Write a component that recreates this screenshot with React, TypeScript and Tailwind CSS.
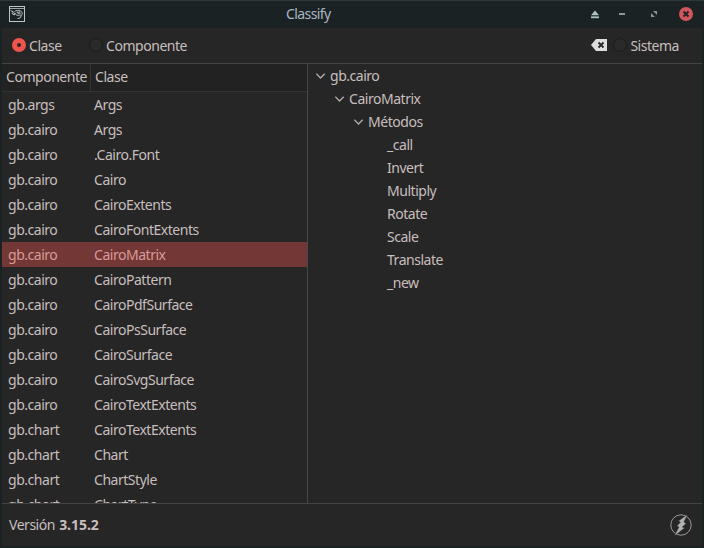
import React from "react";

const rows: [string, string][] = [
  ["gb.args", "Args"],
  ["gb.cairo", "Args"],
  ["gb.cairo", ".Cairo.Font"],
  ["gb.cairo", "Cairo"],
  ["gb.cairo", "CairoExtents"],
  ["gb.cairo", "CairoFontExtents"],
  ["gb.cairo", "CairoMatrix"],
  ["gb.cairo", "CairoPattern"],
  ["gb.cairo", "CairoPdfSurface"],
  ["gb.cairo", "CairoPsSurface"],
  ["gb.cairo", "CairoSurface"],
  ["gb.cairo", "CairoSvgSurface"],
  ["gb.cairo", "CairoTextExtents"],
  ["gb.chart", "CairoTextExtents"],
  ["gb.chart", "Chart"],
  ["gb.chart", "ChartStyle"],
  ["gb.chart", "ChartType"],
];

const methods = ["_call", "Invert", "Multiply", "Rotate", "Scale", "Translate", "_new"];

function Radio({ label, checked }: { label: string; checked?: boolean }) {
  return (
    <label className="flex items-center gap-[3px]">
      <span
        className={
          checked
            ? "mb-0.5 flex size-3.5 items-center justify-center rounded-full bg-[#f0544c]"
            : "mb-0.5 size-3.5 rounded-full border border-[#1b1b1b] bg-[#2a2a2a]"
        }
      >
        {checked && <span className="size-1 rounded-full bg-[#262626]" />}
      </span>
      <span>{label}</span>
    </label>
  );
}

function Chevron() {
  return (
    <svg width="10" height="6" viewBox="0 0 10 6" fill="none" stroke="#b5adad" strokeWidth="1.3">
      <path d="M0.3 0.7 L4.5 5 L8.7 0.7" />
    </svg>
  );
}

function TitleBar() {
  return (
    <header className="flex h-7 shrink-0 items-center border-t border-[#2c393b] bg-[#1b2224] pb-px pl-[9px] pr-[11px]">
      <svg width="16" height="16" viewBox="0 0 16 16" fill="none" stroke="#bcc4c4">
        <rect x="0.5" y="0.5" width="15" height="15" />
        <path d="M1 2.5H15" strokeWidth="0.8" />
        <path d="M1.5 4.5L4.5 6L3 7.5L5.5 9L5 6.5M5.5 5.5C7.5 4 11 3.8 12.8 6C14 8 12.8 10 10.5 9C8.5 9.8 6.5 9 6 7M7.5 6L9.5 7.5L9 5.5M10.5 5.5L11 8M12.5 9.5L11 12L8.5 12.5" />
      </svg>
      <h1 className="ml-[261px] flex-1 tracking-[-0.58px] text-[#a9b6c2]">Classify</h1>
      <svg width="10" height="9" viewBox="0 0 10 9" fill="#adc2be">
        <path d="M5 0.5L9 5.3H1Z" />
        <rect x="1" y="6.4" width="8" height="1.8" />
      </svg>
      <span className="ml-[19px] h-0.5 w-1.5 bg-[#8a9698]" />
      <svg className="ml-[26px]" width="6" height="6" viewBox="0 0 6 6" fill="#8a9698">
        <path d="M2 0H6V4ZM0 2L4 6H0Z" />
      </svg>
      <svg className="ml-[22px]" width="14" height="14" viewBox="0 0 14 14">
        <circle cx="7" cy="7" r="7" fill="#d2555b" />
        <path d="M4.5 4.5L9.5 9.5M9.5 4.5L4.5 9.5" stroke="#1b2224" strokeWidth="1.8" />
      </svg>
    </header>
  );
}

function Toolbar() {
  return (
    <div className="flex h-9 shrink-0 items-center border-b border-[#444444] pl-2.5 pr-[23px] pt-px">
      <Radio label="Clase" checked />
      <div className="ml-[27.5px]">
        <Radio label="Componente" />
      </div>
      <svg className="mb-0.5 ml-auto mr-1.5" width="16" height="12" viewBox="0 0 16 12">
        <path d="M5 0H16V12H5L0 6Z" fill="#dedede" />
        <path d="M7.5 3.5L12.5 8.5M12.5 3.5L7.5 8.5" stroke="#262626" strokeWidth="1.8" />
      </svg>
      <Radio label="Sistema" />
    </div>
  );
}

function ClassTable() {
  return (
    <section className="flex w-[306px] shrink-0 flex-col overflow-hidden border-r border-[#484848]">
      <div className="flex h-7 shrink-0 items-center border-b border-[#333333] bg-[#222222]">
        <span className="flex h-full w-[89px] shrink-0 items-center border-r border-[#353535] pb-px pl-1">Componente</span>
        <span className="pb-px pl-1">Clase</span>
      </div>
      {rows.map(([component, name], i) => (
        <div
          key={i}
          className={
            i === 6
              ? "flex h-[25px] shrink-0 items-center bg-[#733735] pl-1.5 pt-px text-[#d99a98]"
              : "flex h-[25px] shrink-0 items-center pl-1.5 pt-px"
          }
        >
          <span className="w-[86px]">{component}</span>
          <span>{name}</span>
        </div>
      ))}
    </section>
  );
}

function Tree() {
  return (
    <section className="flex-1">
      <div className="flex h-[23px] items-center gap-1 pl-2"><Chevron />gb.cairo</div>
      <div className="flex h-[23px] items-center gap-1 pl-[27px]"><Chevron />CairoMatrix</div>
      <div className="flex h-[23px] items-center gap-1 pl-[46px]"><Chevron />Métodos</div>
      {methods.map((m) => (
        <div key={m} className="flex h-[23px] items-center pl-[79px]">{m}</div>
      ))}
    </section>
  );
}

export default function App() {
  return (
    <div className="flex h-[548px] w-[704px] flex-col overflow-hidden bg-[#1b2224] font-['Noto_Sans',sans-serif] text-[14px] leading-[18px] tracking-[-0.47px] text-[#c8bebe]">
      <TitleBar />
      <main className="mx-0.5 mb-0.5 flex min-h-0 flex-1 flex-col bg-[#262626]">
        <Toolbar />
        <div className="flex min-h-0 flex-1 overflow-hidden">
          <ClassTable />
          <Tree />
        </div>
        <footer className="flex h-[43px] shrink-0 items-center justify-between border-t border-[#444444] pl-[7px] pr-2.5">
          <span>Versión <b className="ml-px tracking-[-0.05px]">3.15.2</b></span>
          <svg width="22" height="22" viewBox="0 0 22 22">
            <circle cx="11" cy="11" r="10.2" fill="none" stroke="#999999" />
            <path d="M17.5 0.5L8.5 7L10.5 8.2L7 12L9 13L4.5 21.8L14.5 14L12.2 13L16 9.5L13.8 8Z" fill="#b0b0b0" stroke="#262626" strokeWidth="0.3" />
          </svg>
        </footer>
      </main>
    </div>
  );
}
